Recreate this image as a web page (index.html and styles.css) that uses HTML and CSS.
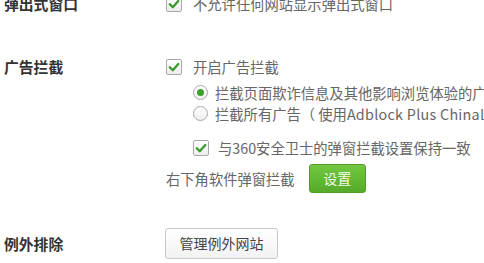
FILE: index.html
```html
<!DOCTYPE html>
<html lang="zh-CN">
<head>
<meta charset="utf-8">
<title>设置</title>
<link rel="stylesheet" href="styles.css">
</head>
<body>
<div class="page">
  <div class="section s1">
    <div class="label">弹出式窗口</div>
    <div class="content">
      <div class="line">
        <span class="cb"><svg viewBox="0 0 16 16" width="16" height="16"><path d="M3.8 8.2 L6.8 11.2 L12.3 5" fill="none" stroke="#3a9a2c" stroke-width="2.3" stroke-linecap="round" stroke-linejoin="round"/></svg></span>
        <span class="txt">不允许任何网站显示弹出式窗口</span>
      </div>
    </div>
  </div>

  <div class="section s2">
    <div class="label">广告拦截</div>
    <div class="content">
      <div class="line">
        <span class="cb"><svg viewBox="0 0 16 16" width="16" height="16"><path d="M3.8 8.2 L6.8 11.2 L12.3 5" fill="none" stroke="#3a9a2c" stroke-width="2.3" stroke-linecap="round" stroke-linejoin="round"/></svg></span>
        <span class="txt">开启广告拦截</span>
      </div>
      <div class="sub radios">
        <div class="rline">
          <span class="radio on"><span class="dot"></span></span>
          <span class="txt">拦截页面欺诈信息及其他影响浏览体验的广告</span>
        </div>
        <div class="rline">
          <span class="radio"></span>
          <span class="txt">拦截所有广告（ 使用<span class="latin">Adblock Plus ChinaList</span>）</span>
        </div>
      </div>
      <div class="sub line sync">
        <span class="cb"><svg viewBox="0 0 16 16" width="16" height="16"><path d="M3.8 8.2 L6.8 11.2 L12.3 5" fill="none" stroke="#3a9a2c" stroke-width="2.3" stroke-linecap="round" stroke-linejoin="round"/></svg></span>
        <span class="txt">与360安全卫士的弹窗拦截设置保持一致</span>
      </div>
      <div class="btnrow">
        <span class="plain">右下角软件弹窗拦截</span>
        <button class="btn-green">设置</button>
      </div>
    </div>
  </div>

  <div class="section s3">
    <div class="label">例外排除</div>
    <div class="content">
      <button class="btn-gray">管理例外网站</button>
    </div>
  </div>
</div>
</body>
</html>
```

FILE: styles.css
```css
html, body {
  margin: 0;
  padding: 0;
  background: #fff;
  overflow: hidden;
}
body {
  width: 484px;
  height: 263px;
  font-family: "Noto Sans CJK SC", "Noto Sans", sans-serif;
  font-size: 14.3px;
  color: #666;
  white-space: nowrap;
}
.page {
  padding-left: 4px;
}
.section {
  display: flex;
  align-items: flex-start;
}
.label {
  width: 162px;
  flex: none;
  font-size: 14.8px;
  font-weight: bold;
  color: #333;
  line-height: 22px;
}
.content {
  display: flex;
  flex-direction: column;
}
.s1 { margin-top: -7px; }
.s2 { margin-top: 41px; }
.s3 { margin-top: 35px; align-items: center; }
.s3 .label { line-height: 31px; }

.line {
  display: flex;
  align-items: center;
  height: 22px;
}
.cb {
  width: 16px;
  height: 16px;
  box-sizing: border-box;
  border: 1px solid #a9a9a9;
  border-radius: 2px;
  background: linear-gradient(#ffffff, #ececec);
  display: flex;
  align-items: center;
  justify-content: center;
  flex: none;
  margin-right: 11px;
}
.cb svg {
  display: block;
  margin: -1px;
}
.txt {
  line-height: 22px;
}
.latin {
  letter-spacing: 0.3px;
}
.sub {
  margin-left: 27px;
}
.radios {
  margin-top: 4px;
  display: flex;
  flex-direction: column;
}
.rline {
  display: flex;
  align-items: center;
  height: 21px;
}
.radio {
  width: 15px;
  height: 15px;
  box-sizing: border-box;
  border: 1px solid #a9a9a9;
  border-radius: 50%;
  background: linear-gradient(#ffffff, #eeeeee);
  display: flex;
  align-items: center;
  justify-content: center;
  margin-right: 7px;
  flex: none;
}
.radio .dot {
  width: 7px;
  height: 7px;
  border-radius: 50%;
  background: #3d9f2d;
}
.sync {
  margin-top: 13px;
}
.sync .cb { margin-right: 9px; }
.btnrow {
  margin-top: 5px;
  display: flex;
  align-items: center;
  height: 29px;
}
.plain {
  margin-right: 14px;
}
.btn-green {
  width: 57px;
  height: 29px;
  border: 1px solid #4f9e27;
  border-radius: 3px;
  background: linear-gradient(#73c640, #55ab2a);
  color: #f1fbe9;
  font-family: inherit;
  font-size: 14px;
  padding: 0;
  line-height: 27px;
}
.btn-gray {
  width: 113px;
  height: 31px;
  border: 1px solid #c8c8c8;
  border-radius: 3px;
  background: linear-gradient(#ffffff, #f2f2f2);
  color: #444;
  font-family: inherit;
  font-size: 14px;
  padding: 0;
  line-height: 29px;
  margin-left: -1px;
}
```
